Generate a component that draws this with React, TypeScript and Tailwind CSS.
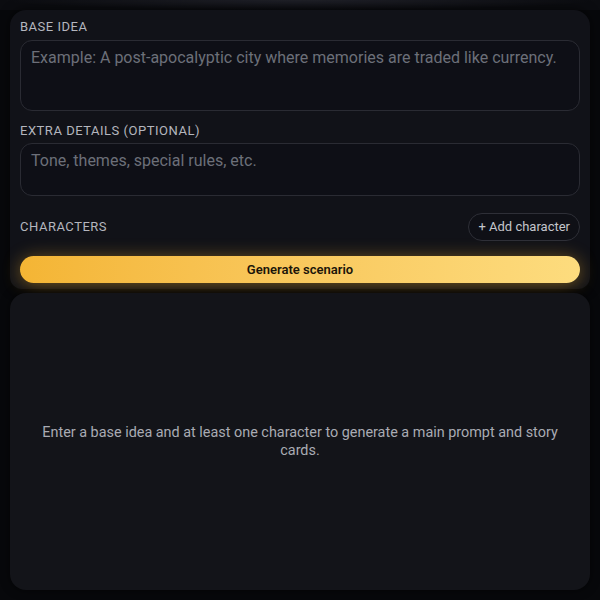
import React from "react";

const font = { fontFamily: "Roboto, 'Noto Sans', sans-serif" };

function FieldLabel({ children }: { children: React.ReactNode }) {
  return (
    <div className="text-[13px] leading-4 tracking-[0.04em] uppercase text-[#b4b6be]">
      {children}
    </div>
  );
}

export default function App() {
  return (
    <div
      className="h-[600px] w-[600px] overflow-hidden bg-[#07080b] flex flex-col px-[10px]"
      style={font}
    >
      {/* header fade above the form */}
      <div className="h-[10px] shrink-0 bg-[radial-gradient(ellipse_at_top,#1f2028_0%,#0b0c10_70%)] -mx-[10px]" />

      {/* form card */}
      <div className="rounded-t-2xl rounded-b-xl bg-[#111218] px-[10px] pt-[9px] pb-[6px] shadow-[0_0_12px_rgba(0,0,0,0.6)]">
        <FieldLabel>Base idea</FieldLabel>
        <textarea
          className="mt-[5px] block w-full h-[71px] resize-none rounded-xl border border-[#2a2b33] bg-[#0e0f16] px-[10px] pt-[5px] text-[16px] leading-6 text-[#d0d2d8] placeholder:text-[#6c6f79] outline-none"
          placeholder="Example: A post-apocalyptic city where memories are traded like currency."
          style={font}
        />

        <div className="mt-[12px]">
          <FieldLabel>Extra details (optional)</FieldLabel>
        </div>
        <textarea
          className="mt-[4px] block w-full h-[53px] resize-none rounded-xl border border-[#2a2b33] bg-[#0e0f16] px-[10px] pt-[5px] text-[16px] leading-6 text-[#d0d2d8] placeholder:text-[#6c6f79] outline-none"
          placeholder="Tone, themes, special rules, etc."
          style={font}
        />

        <div className="mt-[17px] flex items-center justify-between">
          <FieldLabel>Characters</FieldLabel>
          <button className="h-[28px] rounded-full border border-[#2e2f37] bg-[#0f1016] px-[9px] text-[13px] text-[#c4c6cc]">
            + Add character
          </button>
        </div>

        <button className="mt-[15px] block w-full h-[27px] rounded-full bg-gradient-to-r from-[#f4b534] to-[#fddc7e] text-[13px] font-semibold text-[#1b1509] shadow-[0_2px_18px_rgba(240,172,40,0.45)]">
          Generate scenario
        </button>
      </div>

      {/* result area */}
      <div className="mt-[4px] h-[297px] shrink-0 rounded-2xl bg-[#131419] shadow-[0_0_10px_rgba(0,0,0,0.6)] flex items-center justify-center px-[24px]">
        <p className="text-center text-[14.4px] leading-[18px] text-[#a9abb3]">
          Enter a base idea and at least one character to generate a main prompt and story cards.
        </p>
      </div>
    </div>
  );
}
